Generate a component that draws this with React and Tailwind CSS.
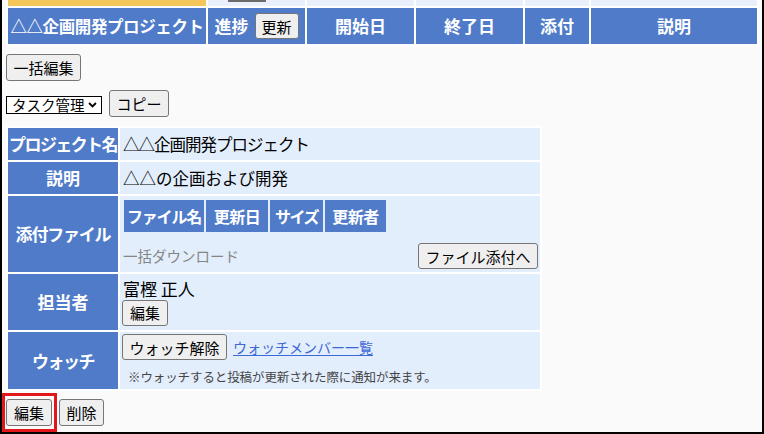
import React from "react";

const BLUE = "bg-[#4f7bc8]";
const PALE = "bg-[#e3eefc]";

const Btn = ({ children, className = "" }) => (
  <button
    type="button"
    className={`flex items-center justify-center shrink-0 border border-[#767676] rounded-[3px] bg-[#efefef] text-[15px] leading-none text-black ${className}`}
  >
    {children}
  </button>
);

const Label = ({ children, height, className = "" }) => (
  <td className={`${BLUE} p-0`}>
    <div
      className={`flex items-center justify-center whitespace-nowrap text-white font-bold text-[17px] ${height} ${className}`}
    >
      {children}
    </div>
  </td>
);

const HeaderBar = () => (
  <table className="table-fixed border-separate border-spacing-[2px] bg-white ml-[4px] mt-[-2px] w-[753px]">
    <colgroup>
      <col className="w-[198px]" />
      <col className="w-[97px]" />
      <col className="w-[107px]" />
      <col className="w-[107px]" />
      <col className="w-[64px]" />
      <col className="w-[166px]" />
    </colgroup>
    <tbody>
      {/* tail of the row above, scrolled off */}
      <tr>
        <td className="p-0 h-[6px] bg-[#f5c75a]" />
        <td className="p-0 h-[6px] bg-[#eaf0fb] align-top">
          <div className="ml-[20px] w-[38px] h-[2px] bg-[#6b6b6b]" />
        </td>
        <td className="p-0 h-[6px] bg-[#eaf0fb]" />
        <td className="p-0 h-[6px] bg-[#eaf0fb]" />
        <td className="p-0 h-[6px] bg-[#eaf0fb]" />
        <td className="p-0 h-[6px] bg-[#eaf0fb]" />
      </tr>
      <tr className="text-white font-bold text-[17px]">
        <th className={`${BLUE} p-0 h-[36px] whitespace-nowrap text-[16.5px] tracking-[-0.4px]`}>
          △△企画開発プロジェクト
        </th>
        <th className={`${BLUE} p-0 h-[36px]`}>
          <div className="flex items-center justify-center gap-[6px]">
            <span>進捗</span>
            <Btn className="h-[26px] w-[44px] font-normal">更新</Btn>
          </div>
        </th>
        <th className={`${BLUE} p-0 h-[36px]`}>開始日</th>
        <th className={`${BLUE} p-0 h-[36px]`}>終了日</th>
        <th className={`${BLUE} p-0 h-[36px]`}>添付</th>
        <th className={`${BLUE} p-0 h-[36px]`}>説明</th>
      </tr>
    </tbody>
  </table>
);

const FileTable = () => (
  <table className="table-fixed border-separate border-spacing-[2px] w-[266px] self-start">
    <tbody>
      <tr className="text-white font-bold text-[16px] whitespace-nowrap">
        <th className={`${BLUE} p-0 h-[32px] w-[80px] tracking-[-1.2px]`}>ファイル名</th>
        <th className={`${BLUE} p-0 h-[32px] w-[62px] tracking-[-0.5px]`}>更新日</th>
        <th className={`${BLUE} p-0 h-[32px] w-[53px] tracking-[-1.5px]`}>サイズ</th>
        <th className={`${BLUE} p-0 h-[32px] w-[61px] tracking-[-0.5px]`}>更新者</th>
      </tr>
    </tbody>
  </table>
);

const DetailTable = () => (
  <table className="table-fixed border-separate border-spacing-[2px] bg-white ml-[4px] mt-[9px] w-[536px]">
    <colgroup>
      <col className="w-[110px]" />
      <col className="w-[420px]" />
    </colgroup>
    <tbody className="text-[16.5px]">
      <tr>
        <Label height="h-[32px]" className="text-[16px] tracking-[-1.6px]">
          プロジェクト名
        </Label>
        <td className={`${PALE} p-0`}>
          <div className="h-[32px] flex items-center pl-[3px] tracking-[-1px]">△△企画開発プロジェクト</div>
        </td>
      </tr>
      <tr>
        <Label height="h-[32px]">説明</Label>
        <td className={`${PALE} p-0`}>
          <div className="h-[32px] flex items-center pl-[3px]">△△の企画および開発</div>
        </td>
      </tr>
      <tr>
        <Label height="h-[76px]" className="tracking-[-1.2px]">
          添付ファイル
        </Label>
        <td className={`${PALE} p-0 align-top`}>
          <div className="h-[76px] flex flex-col pl-[2px] pt-[2px] pr-[2px]">
            <FileTable />
            <div className="flex items-center justify-between mt-[9px]">
              <span className="pl-[1px] text-[14.5px] text-[#858585]">一括ダウンロード</span>
              <Btn className="h-[26px] w-[120px]">ファイル添付へ</Btn>
            </div>
          </div>
        </td>
      </tr>
      <tr>
        <Label height="h-[56px]">担当者</Label>
        <td className={`${PALE} p-0`}>
          <div className="h-[56px] flex flex-col justify-center items-start pl-[2px]">
            <span className="pl-[1px] leading-[20px] text-[17px]">富樫 正人</span>
            <Btn className="h-[26px] w-[46px] mt-[1px]">編集</Btn>
          </div>
        </td>
      </tr>
      <tr>
        <Label height="h-[57px]" className="tracking-[-1.5px]">
          ウォッチ
        </Label>
        <td className={`${PALE} p-0 align-top`}>
          <div className="h-[57px] flex flex-col pl-[2px] pt-[2px]">
            <div className="flex items-center">
              <Btn className="h-[26px] w-[105px]">ウォッチ解除</Btn>
              <a href="#watch" className="ml-[6px] text-[14px] text-[#3d68d8] underline underline-offset-2">
                ウォッチメンバー一覧
              </a>
            </div>
            <p className="mt-[8px] pl-[6px] text-[12.5px] leading-[18px] text-[#444] tracking-[-0.1px]">
              ※ウォッチすると投稿が更新された際に通知が来ます。
            </p>
          </div>
        </td>
      </tr>
    </tbody>
  </table>
);

export default function App() {
  return (
    <div className="relative w-[764px] h-[434px] overflow-hidden bg-[#fafafa] border-x-2 border-b-2 border-black text-black font-['Noto_Sans_CJK_JP','Noto_Sans',sans-serif]">
      <HeaderBar />

      <div className="pl-[4px]">
        <Btn className="mt-[8px] h-[27px] w-[75px]">一括編集</Btn>

        <div className="flex items-end gap-[7px] mt-[9px]">
          {/* category picker */}
          <div className="flex items-center justify-between w-[96px] h-[18px] mb-[3px] pl-[5px] pr-[4px] border border-black bg-white text-[14.5px] leading-none cursor-default">
            <span>タスク管理</span>
            <svg viewBox="0 0 10 7" className="w-[9px] h-[6px]">
              <path d="M1 1.2 L5 5.2 L9 1.2" fill="none" stroke="#000" strokeWidth="2.2" />
            </svg>
          </div>
          <Btn className="h-[27px] w-[60px]">コピー</Btn>
        </div>
      </div>

      <DetailTable />

      <div className="flex gap-[7px] pl-[4px] mt-[8px]">
        <Btn className="h-[27px] w-[46px]">編集</Btn>
        <Btn className="h-[27px] w-[45px]">削除</Btn>
      </div>

      {/* highlight around the edit button */}
      <div className="absolute left-0 top-[393px] w-[55px] h-[39px] border-[3px] border-[#e3161b] pointer-events-none" />
    </div>
  );
}
